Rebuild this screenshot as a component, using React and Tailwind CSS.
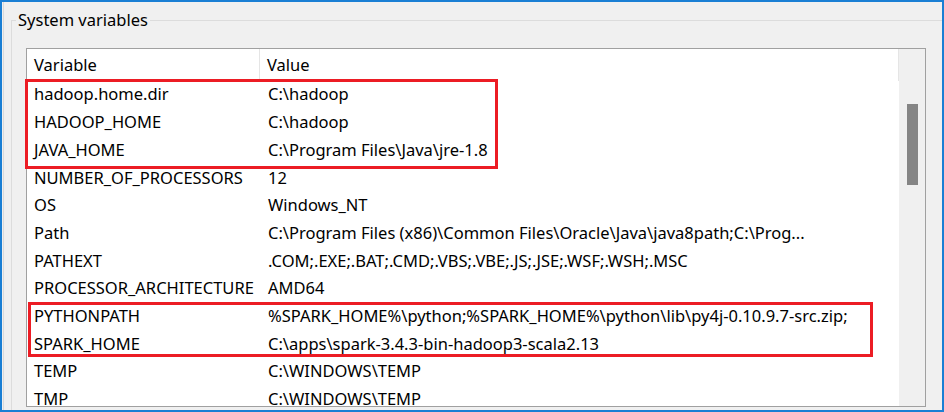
const rows = [
  ['hadoop.home.dir', 'C:\\hadoop'],
  ['HADOOP_HOME', 'C:\\hadoop'],
  ['JAVA_HOME', 'C:\\Program Files\\Java\\jre-1.8'],
  ['NUMBER_OF_PROCESSORS', '12'],
  ['OS', 'Windows_NT'],
  ['Path', 'C:\\Program Files (x86)\\Common Files\\Oracle\\Java\\java8path;C:\\Prog...'],
  ['PATHEXT', '.COM;.EXE;.BAT;.CMD;.VBS;.VBE;.JS;.JSE;.WSF;.WSH;.MSC'],
  ['PROCESSOR_ARCHITECTURE', 'AMD64'],
  ['PYTHONPATH', '%SPARK_HOME%\\python;%SPARK_HOME%\\python\\lib\\py4j-0.10.9.7-src.zip;'],
  ['SPARK_HOME', 'C:\\apps\\spark-3.4.3-bin-hadoop3-scala2.13'],
  ['TEMP', 'C:\\WINDOWS\\TEMP'],
  ['TMP', 'C:\\WINDOWS\\TEMP'],
]

export default function App() {
  return (
    <div
      className="relative w-[944px] h-[412px] overflow-hidden bg-[#f0f0f0] border-2 border-[#1a7fd4] text-black"
      style={{ fontFamily: '"Noto Sans", "Open Sans", sans-serif' }}
    >
      <div className="flex h-full">
        <div className="w-px ml-px bg-[#dadada]" />
        <div className="flex-1 pl-[7px] pt-[18px]">
          <div className="relative h-full border-t border-l border-[#dcdcdc] pl-[14px] pt-[27px]">
            <span className="absolute left-[4px] -top-[13px] px-[2px] bg-[#f0f0f0] text-[16.5px] leading-[24px]">
              System variables
            </span>

            <div className="flex w-[900px] h-[359px] bg-white border border-[#a0a0a0]">
              <div className="flex-1 flex flex-col overflow-hidden">
                <div className="flex shrink-0 h-[32px] text-[16.5px]">
                  <div className="w-[233px] flex items-center pl-[7px] border-r border-[#e5e5e5]">Variable</div>
                  <div className="flex-1 flex items-center pl-[7px] border-r border-[#e5e5e5]">Value</div>
                </div>
                {rows.map(([name, value]) => (
                  <div key={name} className="flex shrink-0 h-[27.7px] items-center text-[16.5px] whitespace-nowrap">
                    <div className="w-[234px] pl-[7px]">{name}</div>
                    <div className="flex-1 pl-[7px]">{value}</div>
                  </div>
                ))}
              </div>
              <div className="w-[26px] shrink-0 bg-[#f0f0f0] pt-[55px] flex justify-center">
                <div className="w-[11px] h-[81px] bg-[#858585]" />
              </div>
            </div>
          </div>
        </div>
      </div>

      {/* red highlight boxes */}
      <div className="absolute left-[23px] top-[77px] w-[473px] h-[90px] border-[3px] border-[#ec1c24]" />
      <div className="absolute left-[26px] top-[300px] w-[845px] h-[55px] border-[3px] border-[#ec1c24]" />
    </div>
  )
}
